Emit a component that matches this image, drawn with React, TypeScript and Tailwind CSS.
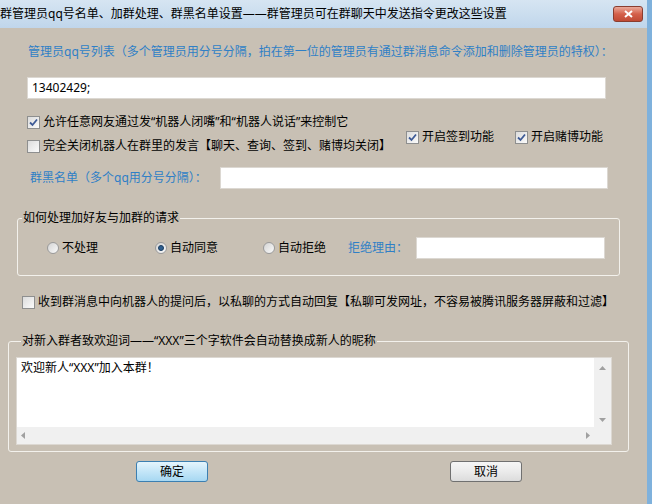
import React from 'react'

const font = { fontFamily: '"Noto Sans", "Noto Sans CJK SC", sans-serif' }

function CheckBox({ checked, label }: { checked?: boolean; label: string }) {
  return (
    <label className="flex items-center gap-[3px] h-[16px] text-[12px] leading-[16px] text-black whitespace-nowrap">
      <span className="w-[13px] h-[13px] border border-[#8e8f8f] bg-gradient-to-br from-[#dcdcdc] to-[#fbfbfb] flex items-center justify-center shrink-0">
        {checked && (
          <svg width="9" height="9" viewBox="0 0 9 9">
            <path d="M1 4.5 L3.5 7 L8 1.5" stroke="#3d5a96" strokeWidth="1.8" fill="none" />
          </svg>
        )}
      </span>
      {label}
    </label>
  )
}

function Radio({ checked, label }: { checked?: boolean; label: string }) {
  return (
    <label className="flex items-center gap-[3px] h-[16px] text-[12px] leading-[16px] text-black whitespace-nowrap">
      <span className="w-[12px] h-[12px] rounded-full border border-[#9a9a9a] bg-gradient-to-br from-[#d4d4d4] to-[#fafafa] flex items-center justify-center shrink-0">
        {checked && <span className="w-[6px] h-[6px] rounded-full bg-[#2f5f8f] border border-[#1c3d60]" />}
      </span>
      {label}
    </label>
  )
}

export default function App() {
  return (
    <div
      style={font}
      className="w-[652px] h-[504px] bg-[#c8c0b4] flex flex-col border-r-[5px] border-r-[#7fb1dc] overflow-hidden"
    >
      {/* title bar */}
      <div className="h-[28px] bg-gradient-to-b from-[#d6e5f2] to-[#c0d6eb] flex items-center justify-between shrink-0">
        <span className="text-[12px] text-black whitespace-nowrap">
          群管理员qq号名单、加群处理、群黑名单设置——群管理员可在群聊天中发送指令更改这些设置
        </span>
        <div className="w-[30px] h-[16px] mr-[4px] rounded-[3px] border border-[#8a3d2f] bg-gradient-to-b from-[#e9a899] via-[#d4604a] to-[#c04a34] flex items-center justify-center">
          <svg width="9" height="8" viewBox="0 0 9 8">
            <path d="M1 1 L8 7 M8 1 L1 7" stroke="white" strokeWidth="2" />
          </svg>
        </div>
      </div>

      <div className="pl-[28px] mt-[16px] text-[12px] leading-[16px] text-[#2f7fc6] whitespace-nowrap">
        管理员qq号列表（多个管理员用分号分隔，拍在第一位的管理员有通过群消息命令添加和删除管理员的特权）：
      </div>

      <div className="ml-[27px] mt-[17px] w-[579px] h-[22px] bg-white border border-[#dcd8d2] flex items-center pl-[4px] text-[12px] text-black">
        13402429;
      </div>

      <div className="ml-[27px] mt-[15px]">
        <CheckBox checked label="允许任意网友通过发“机器人闭嘴”和“机器人说话”来控制它" />
      </div>

      <div className="ml-[27px] h-[24px] flex">
        <div className="self-end">
          <CheckBox label="完全关闭机器人在群里的发言【聊天、查询、签到、赌博均关闭】" />
        </div>
        <div className="ml-[15px] self-start mt-[-1px]">
          <CheckBox checked label="开启签到功能" />
        </div>
        <div className="ml-[21px] self-start mt-[-1px]">
          <CheckBox checked label="开启赌博功能" />
        </div>
      </div>

      <div className="mt-[13px] flex items-center">
        <span className="ml-[30px] w-[190px] text-[12px] text-[#2f7fc6] whitespace-nowrap">群黑名单（多个qq用分号分隔）：</span>
        <div className="w-[388px] h-[22px] bg-white border border-[#dcd8d2]" />
      </div>

      <fieldset className="ml-[17px] mt-[21px] w-[603px] border border-[#f3f1ec] rounded-[3px] pt-[11px] pb-[16px]">
        <legend className="ml-[4px] px-[1px] text-[12px] leading-[16px] text-black">如何处理加好友与加群的请求</legend>
        <div className="flex items-center pl-[29px]">
          <div className="w-[108px]">
            <Radio label="不处理" />
          </div>
          <div className="w-[108px]">
            <Radio checked label="自动同意" />
          </div>
          <div className="w-[85px]">
            <Radio label="自动拒绝" />
          </div>
          <span className="w-[68px] text-[12px] text-[#2f7fc6]">拒绝理由：</span>
          <div className="w-[189px] h-[22px] bg-white border border-[#dcd8d2]" />
        </div>
      </fieldset>

      <div className="ml-[22px] mt-[18px]">
        <CheckBox label="收到群消息中向机器人的提问后，以私聊的方式自动回复【私聊可发网址，不容易被腾讯服务器屏蔽和过滤】" />
      </div>

      <fieldset className="ml-[8px] mt-[23px] w-[621px] border border-[#f3f1ec] rounded-[3px] pt-[8px] pb-[6px] pl-[7px]">
        <legend className="ml-[5px] px-[1px] text-[12px] leading-[16px] text-black">
          对新入群者致欢迎词——“XXX”三个字软件会自动替换成新人的昵称
        </legend>
        <div className="w-[596px] h-[88px] bg-white border border-[#dcd8d2] flex">
          <div className="flex-1 flex flex-col">
            <div className="flex-1 pl-[4px] pt-[2px] text-[12px] leading-[16px] text-black">欢迎新人“XXX”加入本群！</div>
            <div className="h-[17px] bg-[#f0f0f0] flex items-center justify-between px-[4px]">
              <svg width="4" height="7" viewBox="0 0 4 7">
                <path d="M4 0 L0 3.5 L4 7Z" fill="#a0a0a0" />
              </svg>
              <svg width="4" height="7" viewBox="0 0 4 7">
                <path d="M0 0 L4 3.5 L0 7Z" fill="#a0a0a0" />
              </svg>
            </div>
          </div>
          <div className="w-[17px] bg-[#f0f0f0] flex flex-col items-center justify-between pt-[8px] pb-[22px]">
            <svg width="7" height="4" viewBox="0 0 7 4">
              <path d="M0 4 L3.5 0 L7 4Z" fill="#a0a0a0" />
            </svg>
            <svg width="7" height="4" viewBox="0 0 7 4">
              <path d="M0 0 L3.5 4 L7 0Z" fill="#a0a0a0" />
            </svg>
          </div>
        </div>
      </fieldset>

      <div className="mt-[9px] flex">
        <button className="ml-[136px] w-[72px] h-[21px] rounded-[3px] border border-[#3c7fb1] bg-gradient-to-b from-[#e5f5fd] via-[#c4e6f8] to-[#a7d8f2] text-[12px] text-black">
          确定
        </button>
        <button className="ml-[242px] w-[72px] h-[21px] rounded-[3px] border border-[#707070] bg-gradient-to-b from-[#f6f6f6] via-[#ebebeb] to-[#dcdcdc] text-[12px] text-black">
          取消
        </button>
      </div>
    </div>
  )
}
